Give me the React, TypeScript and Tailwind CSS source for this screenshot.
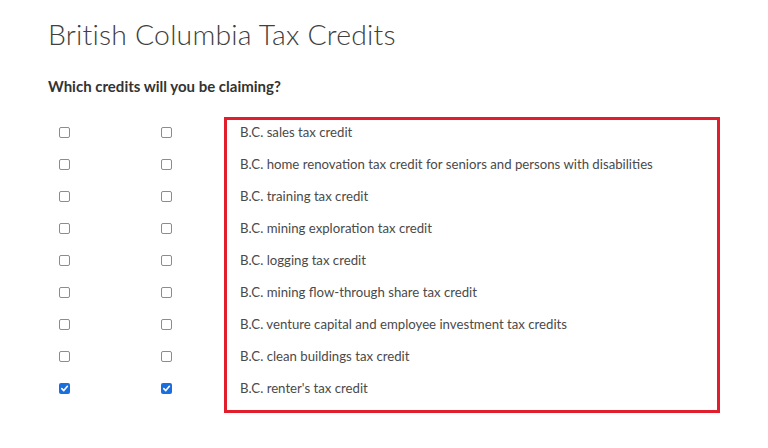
import React, { useState } from 'react'

const credits = [
  'B.C. sales tax credit',
  'B.C. home renovation tax credit for seniors and persons with disabilities',
  'B.C. training tax credit',
  'B.C. mining exploration tax credit',
  'B.C. logging tax credit',
  'B.C. mining flow-through share tax credit',
  'B.C. venture capital and employee investment tax credits',
  'B.C. clean buildings tax credit',
  "B.C. renter's tax credit",
]

const Box = ({ checked, onClick }: { checked: boolean; onClick: () => void }) => (
  <button
    type="button"
    onClick={onClick}
    className={
      checked
        ? 'flex h-[11px] w-[11px] items-center justify-center rounded-[2px] bg-[#1a6fe0]'
        : 'h-[11px] w-[11px] rounded-[2px] border border-[#8c8c8c] bg-white'
    }
  >
    {checked && (
      <svg width="9" height="9" viewBox="0 0 10 10">
        <path d="M2 5.2 L4.2 7.3 L8.2 2.6" fill="none" stroke="white" strokeWidth="1.8" strokeLinecap="round" strokeLinejoin="round" />
      </svg>
    )}
  </button>
)

const App = () => {
  const [rows, setRows] = useState(credits.map((_, i) => [i === 8, i === 8]))

  const toggle = (i: number, col: number) => {
    setRows(rows.map((r, j) => (j === i ? r.map((v, k) => (k === col ? !v : v)) : r)))
  }

  return (
    <div className="relative h-[448px] w-[768px] bg-white font-['Lato',sans-serif] text-[#3f3f3f]">
      <div className="pl-[48px] pt-[16px]">
        <h1 className="text-[28.4px] font-light leading-[36px] tracking-[0.2px] text-[#404040]">
          British Columbia Tax Credits
        </h1>
        <h2 className="mt-[24px] text-[15px] font-bold leading-[20px] text-[#333]">
          Which credits will you be claiming?
        </h2>
      </div>

      <div className="mt-[20px] flex flex-col">
        {credits.map((c, i) => (
          <div key={c} className="flex h-[32px] items-center">
            <div className="flex w-[128px] justify-end pr-[58px]">
              <Box checked={rows[i][0]} onClick={() => toggle(i, 0)} />
            </div>
            <div className="flex w-[112px] pl-[33px]">
              <Box checked={rows[i][1]} onClick={() => toggle(i, 1)} />
            </div>
            <span className="text-[13.2px] leading-[18px] text-[#4a4a4a]">{c}</span>
          </div>
        ))}
      </div>

      {/* highlight annotation */}
      <div className="pointer-events-none absolute left-[224px] top-[117px] h-[296px] w-[496px] border-[3px] border-[#e01e2c]" />
    </div>
  )
}

export default App
